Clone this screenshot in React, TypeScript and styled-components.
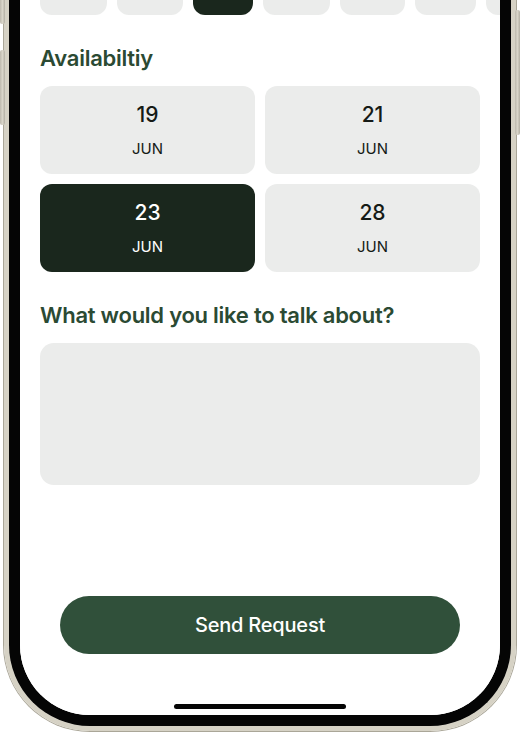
import styled, { createGlobalStyle } from 'styled-components'

type DateSlot = {
  day: string
  month: string
  selected?: boolean
}

const GlobalStyle = createGlobalStyle`
  html, body {
    margin: 0;
    padding: 0;
    background: #ffffff;
    overflow: hidden;
  }

  body {
    font-family: Inter, "Noto Sans", "Liberation Sans", sans-serif;
    -webkit-font-smoothing: antialiased;
  }
`

const dayChipWidths = [67, 66, 60, 67, 65, 61, 60]
const selectedChip = 2

const slots: DateSlot[] = [
  { day: '19', month: 'JUN' },
  { day: '21', month: 'JUN' },
  { day: '23', month: 'JUN', selected: true },
  { day: '28', month: 'JUN' },
]

export default function App() {
  return (
    <>
      <GlobalStyle />
      <Stage>
        <SideButton $side="left" $top={-10} $height={34} />
        <SideButton $side="left" $top={50} $height={75} />
        <SideButton $side="right" $top={10} $height={125} />

        <PhoneShell>
          <Bezel>
            <Screen>
              <DayRow aria-hidden="true">
                {dayChipWidths.map((width, index) => (
                  <DayChip
                    key={index}
                    $width={width}
                    $selected={index === selectedChip}
                  />
                ))}
              </DayRow>

              <SectionTitle>Availabiltiy</SectionTitle>

              <SlotGrid>
                {slots.map((slot) => (
                  <SlotCard
                    key={slot.day}
                    type="button"
                    $selected={slot.selected}
                  >
                    <SlotDay>{slot.day}</SlotDay>
                    <SlotMonth>{slot.month}</SlotMonth>
                  </SlotCard>
                ))}
              </SlotGrid>

              <SectionTitle>What would you like to talk about?</SectionTitle>

              <TopicInput aria-label="Topic" />

              <SendButton type="button">Send Request</SendButton>

              <HomeIndicator />
            </Screen>
          </Bezel>
        </PhoneShell>
      </Stage>
    </>
  )
}

const Stage = styled.div`
  position: relative;
  width: 520px;
  height: 734px;
  overflow: hidden;
  background: #ffffff;
`

const SideButton = styled.span<{ $side: 'left' | 'right'; $top: number; $height: number }>`
  position: absolute;
  top: ${({ $top }) => $top}px;
  ${({ $side }) => ($side === 'left' ? 'left: 0;' : 'right: 0;')}
  width: 5px;
  height: ${({ $height }) => $height}px;
  border-radius: 2px;
  background: linear-gradient(90deg, #bdb9ad, #d9d5c9 50%, #b3afa3);
`

const PhoneShell = styled.div`
  box-sizing: border-box;
  width: 512px;
  height: 731px;
  margin-left: 4px;
  border: 5px solid #d6d2c5;
  border-top: 0;
  border-radius: 0 0 86px 86px;
  box-shadow:
    inset 0 0 0 1px #bcb8ab,
    0 0 0 1px #aaa698;
`

const Bezel = styled.div`
  box-sizing: border-box;
  height: 100%;
  border: 11px solid #050505;
  border-top: 0;
  border-radius: 0 0 81px 81px;
`

const Screen = styled.div`
  display: flex;
  height: 100%;
  box-sizing: border-box;
  flex-direction: column;
  padding: 0 20px;
  overflow: hidden;
  border-radius: 0 0 70px 70px;
  background: #ffffff;
`

const DayRow = styled.div`
  display: flex;
  gap: 10px;
  height: 15px;
`

const DayChip = styled.span<{ $width: number; $selected?: boolean }>`
  flex: 0 0 ${({ $width }) => $width}px;
  height: 15px;
  border-radius: 0 0 12px 12px;
  background: ${({ $selected }) => ($selected ? '#1a271d' : '#ebeceb')};
`

const SectionTitle = styled.h2`
  margin: 29px 0 14px;
  color: #2b4a33;
  font-size: 22px;
  font-weight: 600;
  line-height: 28px;
  letter-spacing: -0.25px;
`

const SlotGrid = styled.div`
  display: grid;
  grid-template-columns: 1fr 1fr;
  gap: 10px;
`

const SlotCard = styled.button<{ $selected?: boolean }>`
  display: flex;
  height: 88px;
  flex-direction: column;
  align-items: center;
  justify-content: center;
  gap: 13px;
  border: 0;
  border-radius: 12px;
  padding: 0;
  background: ${({ $selected }) => ($selected ? '#1a271d' : '#ebeceb')};
  color: ${({ $selected }) => ($selected ? '#ffffff' : '#151a16')};
  font: inherit;
  cursor: pointer;
`

const SlotDay = styled.span`
  font-size: 21px;
  font-weight: 500;
  line-height: 24px;
`

const SlotMonth = styled.span`
  font-size: 15px;
  font-weight: 400;
  line-height: 18px;
`

const TopicInput = styled.div`
  height: 142px;
  border-radius: 14px;
  background: #ebeceb;
`

const SendButton = styled.button`
  align-self: center;
  width: 400px;
  height: 58px;
  margin-top: auto;
  border: 0;
  border-radius: 29px;
  background: #30503a;
  color: #ffffff;
  font: inherit;
  font-size: 20px;
  font-weight: 500;
  letter-spacing: -0.2px;
  cursor: pointer;
`

const HomeIndicator = styled.span`
  align-self: center;
  width: 172px;
  height: 5px;
  margin: 50px 0 6px;
  border-radius: 3px;
  background: #050505;
`
